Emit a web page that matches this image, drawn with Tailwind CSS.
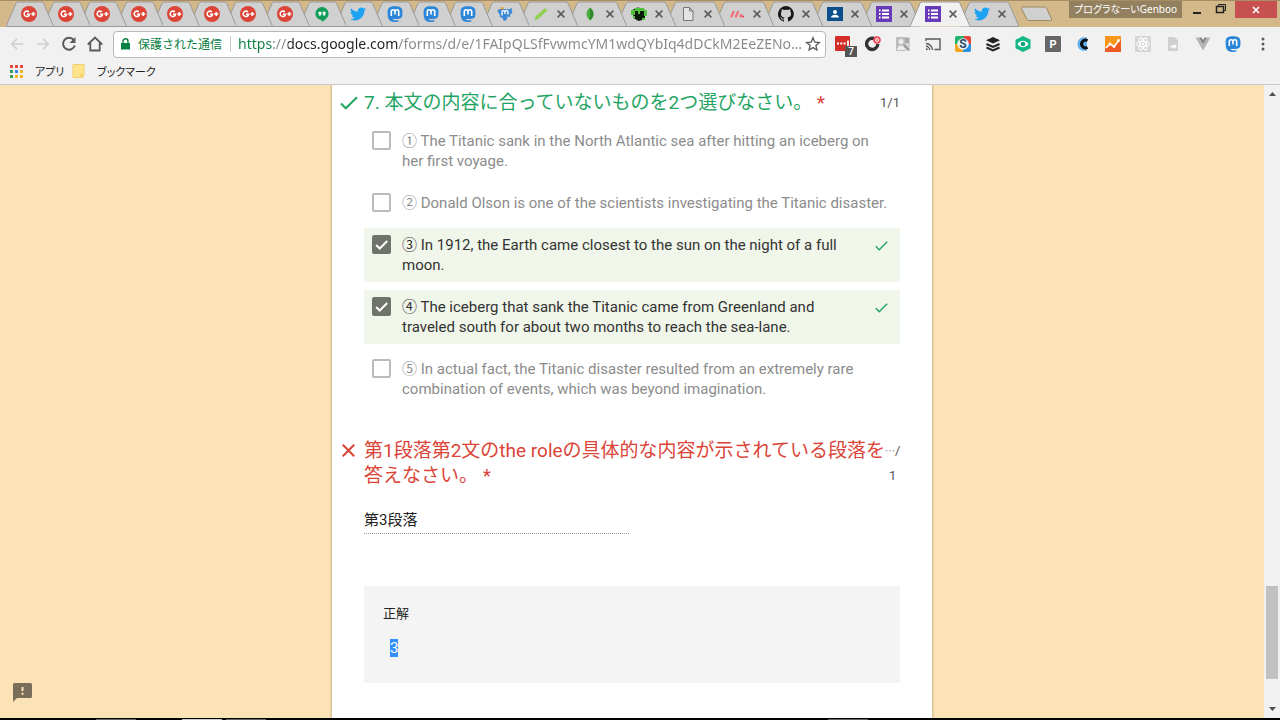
<!DOCTYPE html>
<html lang="ja">

<head>
    <meta charset="UTF-8">
    <meta name="viewport" content="width=device-width, initial-scale=1.0">
    <title>Google フォーム</title>
    <script src="https://cdn.jsdelivr.net/npm/@tailwindcss/browser@4"></script>
</head>

<body class="flex h-screen flex-col overflow-hidden bg-black font-[Roboto,'Noto_Sans_CJK_JP',sans-serif]">

<!-- Icon sprite -->
<svg class="hidden">
    <symbol id="gplus" viewBox="0 0 16 16">
        <circle cx="8" cy="8" r="8" fill="#db4437"/>
        <path d="M7.8 6A2.7 2.7 0 1 0 8.5 8.3H6M12.300 6v4M10.300 8h4" fill="none" stroke="#fff" stroke-width="1.6"/>
    </symbol>
    <symbol id="hangouts" viewBox="0 0 16 16">
        <path d="M8 1a6.600 6.600 0 0 0-6.600 6.600c0 3.600 3 6.300 6.200 6.300V16c3.400-1.600 7-4.500 7-8.400A6.600 6.600 0 0 0 8 1z" fill="#0f9d58"/>
        <path d="M4.500 5.700h2.800v2.800L6 10H5l.8-1.600H4.500zM8.700 5.700h2.800v2.800L10.200 10h-1l.8-1.600H8.700z" fill="#fff"/>
    </symbol>
    <symbol id="twitter" viewBox="0 0 24 24">
        <path d="M24 4.600a10 10 0 0 1-2.800.8 5 5 0 0 0 2.100-2.700 10 10 0 0 1-3.100 1.200 4.900 4.900 0 0 0-8.400 4.500A14 14 0 0 1 1.700 3.200a4.900 4.900 0 0 0 1.500 6.500 4.900 4.900 0 0 1-2.200-.6 4.900 4.900 0 0 0 3.900 4.900 5 5 0 0 1-2.200.1 4.900 4.900 0 0 0 4.600 3.400A9.900 9.900 0 0 1 0 19.500a14 14 0 0 0 7.500 2.200c9.100 0 14.300-7.700 14-14.600A10 10 0 0 0 24 4.600z" fill="#1da1f2"/>
    </symbol>
    <symbol id="mastodon" viewBox="0 0 16 16">
        <path d="M4 .8C6.500.2 9.500.2 12 .8c2 .5 3.300 2 3.400 4 .1 2 .1 4-.2 5.500-.4 1.500-1.700 2.300-3.200 2.500-2 .3-4.500.4-6.300 0 .1 1.600 2.700 2 5.600 1.300v1.300c-4 1.200-8.400.6-9.800-2.600C.6 10.500.5 7.500.7 4.800.8 2.800 2 1.300 4 .8z" fill="#2b86d9"/>
        <path d="M4.300 10V5.500c0-2.300 3.500-2.300 3.700 0V8.400 5.500c.2-2.300 3.700-2.300 3.700 0V10" fill="none" stroke="#fff" stroke-width="1.6"/>
    </symbol>
    <symbol id="mastodon-alt" viewBox="0 0 16 16">
        <path d="M1 3.500 4 3l8 .2 3-1.200-.3 3 .8 2-2.300 1.500-.2 2.500-2.500-.5-1 3.500-2.500 1-1.500-3-2.500-1-.5-3L.5 6z" fill="#3b88d4"/>
        <path d="M3 1.500 6 1l1 1.500-3 1z" fill="#f79a2b"/>
        <path d="M5 9.500V6c0-1.800 3-1.800 3 0v2V6c0-1.800 3-1.800 3 0v2.500" fill="none" stroke="#fff" stroke-width="1.3"/>
    </symbol>
    <symbol id="pencil" viewBox="0 0 16 16">
        <path d="M1.500 14 2.600 10.500l9.400-8.500 2.400 2.400-9.400 8.500z" fill="#8fd04c"/>
    </symbol>
    <symbol id="leaf" viewBox="0 0 16 16">
        <path d="M8 1.500c5 4.500 4.300 9 0 13-4.300-4-5-8.500 0-13z" fill="#4aad3f"/>
        <path d="M8 1.500c5 4.500 4.300 9 0 13z" fill="#2f8a2c"/>
    </symbol>
    <symbol id="creeper" viewBox="0 0 16 16">
        <path d="M1.500 4 6 1.500l7 1 1.500 5-1 6-6 1.500-5-3z" fill="#0b1a08"/>
        <path d="M0 4h4v5H0zM4 2h9v3H4zM13 4h3v6h-3zM7 5h2v3H7zM2 10h2v2H2zM11 12h3v2h-3z" fill="#4fc33c"/>
        <path d="M4 5h3v3H4zM9 5h3v3H9zM6 8h4v5H6z" fill="#0b1a08"/>
    </symbol>
    <symbol id="doc" viewBox="0 0 16 16">
        <path d="M3.500 1.500h6l3.500 3.500v9.500H3.500zM9.500 1.500V5H13" fill="#e4e4e4" stroke="#777"/>
    </symbol>
    <symbol id="slashes" viewBox="0 0 16 16">
        <path d="m2.500 10.500 2-4.500M7 10.500l2-4.500M11.500 10.500l.6-1.500" stroke="#f2717b" stroke-width="2.4" stroke-linecap="round"/>
        <circle cx="14" cy="10.500" r="1" fill="#e8343f"/>
    </symbol>
    <symbol id="github" viewBox="0 0 16 16">
        <path d="M8 0a8 8 0 0 0-2.500 15.600c.4.1.5-.2.5-.4v-1.500c-2.200.5-2.700-.9-2.700-.9-.4-.9-.9-1.200-.9-1.200-.7-.5.1-.5.1-.5.8.1 1.200.8 1.200.8.7 1.200 1.900.9 2.300.7.1-.5.3-.9.5-1.100-1.800-.2-3.600-.9-3.600-4 0-.9.3-1.600.8-2.100-.1-.2-.4-1 .1-2.100 0 0 .7-.2 2.200.8a7.500 7.500 0 0 1 4 0c1.500-1 2.200-.8 2.200-.8.4 1.100.2 1.900.1 2.100.5.5.8 1.200.8 2.100 0 3.100-1.900 3.700-3.700 3.900.3.3.6.8.6 1.500v2.200c0 .2.1.5.6.4A8 8 0 0 0 8 0z" fill="#191717"/>
    </symbol>
    <symbol id="contact" viewBox="0 0 16 16">
        <path d="M0 1h16v14H0z" fill="#0c4f8c"/>
        <circle cx="8" cy="6" r="2" fill="#fff"/>
        <path d="M4 11.500c0-3.600 8-3.600 8 0z" fill="#fff"/>
    </symbol>
    <symbol id="forms" viewBox="0 0 16 16">
        <path d="M0 0h16v16H0z" fill="#673ab7"/>
        <path d="M3 4.500h1.500M3 8h1.500M3 11.500h1.500M6 4.500h7M6 8h7M6 11.500h7" stroke="#fff" stroke-width="1.8"/>
    </symbol>
    <symbol id="close" viewBox="0 0 8 8">
        <path d="m.6.6 6.800 6.800M7.400.6.6 7.400" stroke="#5a5a5a" stroke-width="1.5"/>
    </symbol>
    <symbol id="tick" viewBox="0 0 18 14">
        <path d="m1 7.500 4.800 4.800L17 1.200" fill="none" stroke="currentColor" stroke-width="2"/>
    </symbol>
    <symbol id="tick-bold" viewBox="0 0 18 14">
        <path d="m1.500 7 5 5L17 1.500" fill="none" stroke="currentColor" stroke-width="2.8"/>
    </symbol>

    <symbol id="ext-lastpass" viewBox="0 0 16 16">
        <rect width="15" height="15" rx="1" fill="#d32d27"/>
        <path d="M2 7.500h2M5.300 7.500h2M8.600 7.500h2M13 4.500v6" stroke="#fff" stroke-width="1.8"/>
    </symbol>
    <symbol id="ext-ring" viewBox="0 0 16 16">
        <path d="M10.500 3.300A5.600 5.600 0 1 0 12.800 8" fill="none" stroke="#333" stroke-width="3.4"/>
        <circle cx="12" cy="4" r="3.800" fill="#ef4d55"/>
        <circle cx="12" cy="4" r="1.500" fill="none" stroke="#fff"/>
    </symbol>
    <symbol id="ext-translate" viewBox="0 0 16 16">
        <path d="M1 1h9v14H1z" fill="#bdbdbd"/>
        <path d="M10 1h5v14h-5z" fill="#d2d2d2"/>
        <path d="M10 2h4v5h-4z" fill="#a8a8a8"/>
        <circle cx="6" cy="5.500" r="2.500" fill="#ededed"/>
        <path d="M2 14c0-6 8-6 8 0z" fill="#ededed"/>
        <path d="m9 9 5 5" stroke="#9a9a9a" stroke-width="2"/>
    </symbol>
    <symbol id="ext-cast" viewBox="0 0 16 16">
        <path d="M1 5V3h14v10.500H9.500M1 7.500a6.500 6.500 0 0 1 6.500 6.500M1 10.300A3.700 3.700 0 0 1 4.700 14" fill="none" stroke="#5a5a5a" stroke-width="1.4"/>
        <circle cx="1.800" cy="13.300" r="1" fill="#5a5a5a"/>
    </symbol>
    <symbol id="ext-s" viewBox="0 0 16 16">
        <path d="M2 0h7v8H0V2a2 2 0 0 1 2-2z" fill="#1fb46b"/>
        <path d="M9 0h5a2 2 0 0 1 2 2v6H8z" fill="#e5453b"/>
        <path d="M0 8h8v8H2a2 2 0 0 1-2-2z" fill="#f6a51c"/>
        <path d="M8 8h8v6a2 2 0 0 1-2 2H8z" fill="#2a8fe0"/>
        <circle cx="8" cy="8" r="5.800" fill="#e9f3fa"/>
        <text x="8" y="12.300" text-anchor="middle" font-size="12" font-weight="700" fill="#2c4a66">S</text>
    </symbol>
    <symbol id="ext-buffer" viewBox="0 0 16 16">
        <path d="m8 1 7 3.300-7 3.300-7-3.300z" fill="#222"/>
        <path d="m1.500 8 6.500 3 6.500-3M1.500 11.500l6.500 3 6.500-3" fill="none" stroke="#222" stroke-width="2"/>
    </symbol>
    <symbol id="ext-eye" viewBox="0 0 16 16">
        <path d="m8 0 7.500 3.800v8.400L8 16 .5 12.200V3.800z" fill="#12b886"/>
        <path d="M2.500 8c3-4.300 8-4.300 11 0-3 4.300-8 4.300-11 0z" fill="#fff"/>
        <circle cx="8" cy="8" r="2.300" fill="#12a07a"/>
    </symbol>
    <symbol id="ext-p" viewBox="0 0 16 16">
        <rect width="16" height="16" rx="1" fill="#666"/>
        <text x="8" y="12" text-anchor="middle" font-size="11" font-weight="700" fill="#fff">P</text>
    </symbol>
    <symbol id="ext-c" viewBox="0 0 16 16">
        <path d="M12 1.500C6 0 2.500 3.500 2.500 8s3.500 8 9.500 6.500z" fill="#62b2f2"/>
        <path d="M12.500 4.800A3.800 3.800 0 1 0 12.500 11.200" fill="none" stroke="#111" stroke-width="3"/>
    </symbol>
    <symbol id="ext-analytics" viewBox="0 0 16 16">
        <rect width="16" height="16" rx="1" fill="#f9971c"/>
        <path d="m0 12.500 5-5 4 3L16 4v11a1 1 0 0 1-1 1H0z" fill="#ee5a24"/>
        <path d="m1 12 4-4 4 2.500 5-6" fill="none" stroke="#fff" stroke-width="1.5"/>
        <circle cx="5" cy="8" r="1.400" fill="#fff"/><circle cx="9" cy="10.500" r="1.400" fill="#fff"/><circle cx="13.500" cy="4.500" r="1.400" fill="#fff"/>
    </symbol>
    <symbol id="ext-react" viewBox="0 0 16 16">
        <path d="M0 0h16v16H0z" fill="#d6d6d6"/>
        <g fill="none" stroke="#fff">
            <ellipse cx="8" cy="8" rx="6.500" ry="2.600"/>
            <ellipse cx="8" cy="8" rx="6.500" ry="2.600" transform="rotate(60 8 8)"/>
            <ellipse cx="8" cy="8" rx="6.500" ry="2.600" transform="rotate(120 8 8)"/>
        </g>
        <circle cx="8" cy="8" r="1.200" fill="#fff"/>
    </symbol>
    <symbol id="ext-page" viewBox="0 0 16 16">
        <path d="M3 1h6.500L13 4.500V15H3z" fill="#cfcfcf"/>
        <path d="M5.500 9.500H9V8l3 2.500L9 13v-1.500H5.500z" fill="#fff"/>
    </symbol>
    <symbol id="ext-vue" viewBox="0 0 16 16">
        <path d="M.5 1.500H4l4 7 4-7h3.500L8 14.500z" fill="#b5b5b5"/>
        <path d="M4 1.500h2.500L8 4l1.500-2.500H12l-4 7z" fill="#868686"/>
    </symbol>
</svg>

<!-- Tab strip -->
<header class="flex h-[27px] shrink-0 items-start border-t border-[#a88c63] bg-[#d3b88a] pl-[6px]">
    <ul id="pinned" class="flex h-[26px] w-[512px]"></ul>
    <ul id="tabs" class="flex h-[26px] w-[490px]"></ul>
    <button aria-label="新しいタブ" class="mt-[5px] ml-3">
        <svg class="h-4 w-8" viewBox="0 0 32 16" fill="#d0d0d0" stroke="#9d8865"><path d="M2.500 1h22q1.500 0 2 1l5 11q.5 1.500-1 1.500H9q-1.500 0-2-1L1.500 2.500Q1 1 2.500 1z"/></svg>
    </button>
    <div class="ml-auto flex h-[17px] items-center pr-[3px]">
        <button class="flex h-[17px] w-[113px] shrink-0 items-center justify-center bg-[#92805f] pb-[2px] font-['Noto_Sans','Noto_Sans_CJK_JP',sans-serif] text-[10px] leading-4 whitespace-nowrap text-white [font-feature-settings:'palt']">プログラなーいGenboo</button>
        <button aria-label="最小化" class="flex w-[29px] justify-center"><svg class="size-3" viewBox="0 0 12 12"><path d="M2 9h8" stroke="#222" stroke-width="2"/></svg></button>
        <button aria-label="元に戻す" class="mr-1 flex w-5 justify-center"><svg class="size-3" viewBox="0 0 12 12" fill="none" stroke="#222"><path d="M3.500 2.500V.5h7v6H9"/><path d="M1.500 2.500h7v6h-7z" stroke-width="1.5"/></svg></button>
        <button aria-label="閉じる" class="flex h-[17px] w-[42px] items-center justify-center bg-[#c75050]"><svg class="size-2" viewBox="0 0 8 8"><path d="m1 1 6 6M7 1 1 7" stroke="#fff" stroke-width="1.6"/></svg></button>
    </div>
</header>

<!-- Address bar and extensions -->
<div class="flex h-[34px] shrink-0 items-center bg-[#f1f1f1] pl-1 text-[#5a5a5a]">
    <button aria-label="戻る" class="flex w-[26px] justify-center text-[#cfcfcf]"><svg class="size-[14px]" viewBox="0 0 16 16" fill="none" stroke="currentColor" stroke-width="1.8"><path d="M15 8H2.500M8 2 2 8l6 6"/></svg></button>
    <button aria-label="進む" class="flex w-[26px] justify-center text-[#cfcfcf]"><svg class="size-[14px]" viewBox="0 0 16 16" fill="none" stroke="currentColor" stroke-width="1.8"><path d="M1 8h12.500M8 2l6 6-6 6"/></svg></button>
    <button aria-label="再読み込み" class="flex w-[26px] justify-center"><svg class="size-4" viewBox="0 0 16 16" fill="none" stroke="currentColor" stroke-width="2"><path d="M12.800 4A6 6 0 1 0 13.800 9.500"/><path d="M14.500 1v6h-6z" fill="currentColor" stroke="none"/></svg></button>
    <button aria-label="ホーム" class="flex w-[26px] justify-center"><svg class="size-4" viewBox="0 0 16 16" fill="none" stroke="currentColor" stroke-width="1.8"><path d="M.8 8.500 8 1.500l7.200 7M3.300 7v7.500h9.400V7"/></svg></button>
    <div class="ml-[5px] flex h-[27px] flex-1 items-center rounded-sm border border-[#b8b8b8] bg-white pr-1 pl-[7px]">
        <svg class="h-3 w-[9px] shrink-0" viewBox="0 0 9 12"><path d="M0 5h9v6.500H0z" fill="#0b8043"/><path d="M2 5V3.200a2.500 2.500 0 0 1 5 0V5" fill="none" stroke="#0b8043" stroke-width="1.4"/></svg>
        <label for="url" class="ml-2 shrink-0 font-['Noto_Sans_CJK_JP',sans-serif] text-[12px] leading-5 text-[#0b8043]">保護された通信</label>
        <span class="ml-2 h-4 w-px shrink-0 bg-[#c8c8c8]"></span>
        <input id="url" type="text" value="https://docs.google.com/forms/d/e/1FAIpQLSfFvwmcYM1wdQYbIq4dDCkM2EeZENo…" class="ml-[7px] min-w-0 flex-1 bg-[linear-gradient(90deg,#0b8043_35px,#888_35px,#888_50px,#222_50px,#222_160px,#888_160px)] bg-clip-text font-['Noto_Sans',sans-serif] text-[14px] leading-5 text-transparent outline-none">
        <button aria-label="ブックマークに追加"><svg class="size-4" viewBox="0 0 16 16" fill="none" stroke="#5a5a5a" stroke-width="1.3"><path d="m8 1.800 1.800 4.300 4.600.4-3.500 3 1 4.500L8 11.600 4.100 14l1-4.500-3.500-3 4.600-.4z"/></svg></button>
    </div>
    <div id="extensions" class="ml-[2px] flex"></div>
    <button aria-label="メニュー" class="mr-[2px] flex w-[30px] justify-center"><svg class="h-4 w-1" viewBox="0 0 4 16" fill="#5a5a5a"><circle cx="2" cy="3" r="1.500"/><circle cx="2" cy="8" r="1.500"/><circle cx="2" cy="13" r="1.500"/></svg></button>
</div>

<!-- Bookmark bar -->
<nav class="flex h-6 shrink-0 items-center border-b border-[#c9c9c9] bg-[#f1f1f1] pb-[3px] pl-[10px] font-['Noto_Sans_CJK_JP',sans-serif] text-[11px] leading-5 text-[#222] [font-feature-settings:'palt']">
    <a href="#" class="flex w-[62px] items-center gap-3">
        <svg class="size-[13px] shrink-0" viewBox="0 0 13 13">
            <path d="M0 0h3v3H0zM5 0h3v3H5zM10 0h3v3h-3z" fill="#e8453c"/>
            <path d="M0 5h3v3H0zM0 10h3v3H0z" fill="#34a05a"/>
            <path d="M5 5h3v3H5z" fill="#3a7ff0"/>
            <path d="M10 5h3v3h-3zM5 10h3v3H5zM10 10h3v3h-3z" fill="#f5b41d"/>
        </svg>
        アプリ
    </a>
    <a href="#" class="flex items-center gap-3">
        <svg class="h-[14px] w-[13px]" viewBox="0 0 13 14"><path d="M1 .5h11v9.500l-1 3.500H1z" fill="#fde38c" stroke="#f0cf6a"/><path d="M8.500 13.500V10H12" fill="#f7d060"/></svg>
        ブックマーク
    </a>
</nav>

<!-- Page -->
<div class="flex min-h-0 flex-1">
    <main class="relative min-w-0 flex-1 overflow-hidden bg-[#fce3b6]">
        <form class="mx-auto h-full w-[600px] bg-white px-8 pt-[5px] shadow-[0_0_2px_1px_rgba(0,0,0,0.2)]">
            <fieldset>
                <legend class="relative flex w-full items-start justify-between text-[19px] leading-[25px] text-[#1fa463]">
                    <svg class="absolute top-[6px] -left-6 h-[14px] w-[18px]"><use href="#tick"/></svg>
                    <span>7. 本文の内容に合っていないものを2つ選びなさい。 <span class="text-[#db4437]">*</span></span>
                    <span class="text-[13px] text-[#555]">1/1</span>
                </legend>
                <div id="options" class="mt-[9px] flex flex-col gap-2"></div>
            </fieldset>

            <section class="mt-8">
                <div class="relative flex items-start justify-between text-[19px] leading-[25px] text-[#db4437]">
                    <svg class="absolute top-[6px] -left-[22px] size-[13px]" viewBox="0 0 13 13"><path d="m.8.8 11.400 11.400M12.200.8.8 12.200" stroke="currentColor" stroke-width="2"/></svg>
                    <label for="answer" class="whitespace-nowrap">第1段落第2文のthe roleの具体的な内容が示されている段落を<br>答えなさい。 <span>*</span></label>
                    <div class="flex shrink-0 flex-col items-end text-[13px] text-[#555]">
                        <span class="flex"><span class="font-['Noto_Sans_CJK_JP',sans-serif] text-[10px] text-[#888]">…</span>/</span>
                        <span class="pr-1">1</span>
                    </div>
                </div>
                <input id="answer" type="text" value="第3段落" readonly class="mt-5 block h-[26px] w-[265px] border-b border-dotted border-[#999] pb-1 text-[15px] leading-5 text-[#222] outline-none">
                <div class="mt-[52px] flex h-[97px] flex-col bg-[#f4f4f4] px-[19px] pt-[18px]">
                    <h3 class="text-[13px] leading-5 text-[#222]">正解</h3>
                    <p class="mt-[15px] pl-[7px] text-[15px] leading-[18px]"><span class="inline-block bg-[#3390ff] text-white">3</span></p>
                </div>
            </section>
        </form>
        <button aria-label="問題を報告" class="absolute bottom-4 left-[13px]">
            <svg class="size-[19px]" viewBox="0 0 19 19"><path d="M1.500 0h16Q19 0 19 1.500v12q0 1.500-1.500 1.500H4l-4 4V1.500Q0 0 1.500 0z" fill="#7a6e5a"/><path d="M9.500 4v4M9.500 9.700v2" stroke="#fce3b6" stroke-width="2"/></svg>
        </button>
    </main>
    <div class="flex w-4 shrink-0 flex-col items-center justify-between bg-[#f1f1f1] py-[7px]">
        <svg class="h-1 w-[7px]" viewBox="0 0 7 4"><path d="M0 4 3.500 0 7 4z" fill="#505050"/></svg>
        <div class="mt-auto mb-7 h-[93px] w-3 bg-[#c1c1c1]"></div>
        <svg class="h-1 w-[7px]" viewBox="0 0 7 4"><path d="m0 0 3.500 4L7 0z" fill="#505050"/></svg>
    </div>
</div>

<!-- Top edge of the taskbar -->
<footer class="flex h-[2px] shrink-0 items-end bg-black pl-24">
    <span class="h-px w-10 bg-[#666]"></span>
    <span class="ml-[46px] h-px w-10 bg-[#ccc]"></span>
    <span class="ml-1 h-px w-10 bg-[#666]"></span>
    <span class="ml-[562px] h-px w-10 bg-[#666]"></span>
</footer>

<script>
    const pinned = ['gplus', 'gplus', 'gplus', 'gplus', 'gplus', 'gplus', 'gplus', 'gplus', 'hangouts', 'twitter',
        'mastodon', 'mastodon', 'mastodon', 'mastodon-alt'];
    const tabs = ['pencil', 'leaf', 'creeper', 'doc', 'slashes', 'github', 'contact', 'forms', 'forms', 'twitter'];
    const activeTab = 8;
    const extensions = ['ext-lastpass', 'ext-ring', 'ext-translate', 'ext-cast', 'ext-s', 'ext-buffer', 'ext-eye',
        'ext-p', 'ext-c', 'ext-analytics', 'ext-react', 'ext-page', 'ext-vue', 'mastodon'];
    const options = [
        {text: '① The Titanic sank in the North Atlantic sea after hitting an iceberg on her first voyage.', checked: false},
        {text: '② Donald Olson is one of the scientists investigating the Titanic disaster.', checked: false},
        {text: '③ In 1912, the Earth came closest to the sun on the night of a full moon.', checked: true},
        {text: '④ The iceberg that sank the Titanic came from Greenland and traveled south for about two months to reach the sea-lane.', checked: true},
        {text: '⑤ In actual fact, the Titanic disaster resulted from an extremely rare combination of events, which was beyond imagination.', checked: false},
    ];

    // Each tab reaches 11px under its right neighbour, the left one stays on top
    function tab(icon, z, width, closable, active) {
        const shape = `M0 25.5 10 2.5Q10.5 1 12 1H${width - 12}Q${width - 10.5} 1 ${width - 10} 2.5L${width} 25.5`;
        return `
            <li class="relative flex-1" style="z-index:${z}">
                <svg class="absolute top-0 left-0 h-[26px] w-[calc(100%+11px)]" viewBox="0 0 ${width} 26" preserveAspectRatio="none">
                    <path d="${shape}${active ? '' : 'z'}" fill="${active ? '#f1f1f1' : '#d0d0d0'}" stroke="#9a9a9a" vector-effect="non-scaling-stroke"/>
                </svg>
                <div class="relative flex h-[26px] items-center gap-2 pl-[15px]">
                    <svg class="size-4 shrink-0"><use href="#${icon}"/></svg>
                    ${closable ? '<button aria-label="タブを閉じる"><svg class="block size-2"><use href="#close"/></svg></button>' : ''}
                </div>
            </li>`;
    }

    document.querySelector('#pinned').innerHTML = pinned.map((icon, i) => tab(icon, 40 - i, 48, false, false)).join('');
    document.querySelector('#tabs').innerHTML = tabs.map((icon, i) =>
        tab(icon, i === activeTab ? 50 : 20 - i, 60, true, i === activeTab)).join('');

    document.querySelector('#extensions').innerHTML = extensions.map((icon, i) => `
        <button aria-label="拡張機能" class="relative flex w-[30px] justify-center">
            <svg class="size-4"><use href="#${icon}"/></svg>
            ${i === 0 ? '<span class="absolute top-[10px] left-[17px] h-[11px] w-3 bg-[#555] text-center text-[10px] leading-[11px] font-medium text-white">7</span>' : ''}
        </button>`).join('');

    document.querySelector('#options').innerHTML = options.map((o) => `
        <label class="flex items-start py-[7px] pr-3 pl-2 text-[15px] leading-5 ${o.checked ? 'bg-[#f0f6e9] text-[#333]' : 'text-[#8c8c8c]'}">
            <span class="grid shrink-0">
                <input type="checkbox" ${o.checked ? 'checked' : ''} class="col-start-1 row-start-1 size-[19px] appearance-none rounded-xs border-2 border-[#bbb] bg-white checked:border-[#70736b] checked:bg-[#70736b]">
                ${o.checked ? '<svg class="pointer-events-none col-start-1 row-start-1 h-[10px] w-[13px] place-self-center text-white"><use href="#tick-bold"/></svg>' : ''}
            </span>
            <span class="ml-[11px] flex-1">${o.text}</span>
            ${o.checked ? '<svg class="mt-[6px] ml-7 h-[10px] w-[13px] shrink-0 text-[#1fa463]"><use href="#tick"/></svg>' : ''}
        </label>`).join('');
</script>
</body>

</html>
